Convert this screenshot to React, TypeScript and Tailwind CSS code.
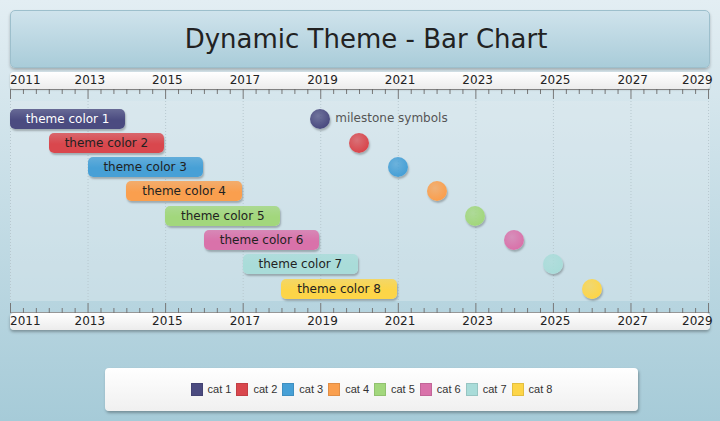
import React from 'react';

const colors = ['#4b4b80', '#d9474d', '#47a0d6', '#fa9f4e', '#a2d77c', '#d972aa', '#a9dcd9', '#fdd548'];
const years = [2011, 2013, 2015, 2017, 2019, 2021, 2023, 2025, 2027, 2029];
const px = (y: number) => (y - 2011) * 38.78;

function Ticks({ down }: { down?: boolean }) {
  const ticks = [];
  for (let i = 0; i <= 54; i++) {
    const x = px(2011 + i / 3);
    const major = i % 6 === 0;
    const h = major ? 10 : 5;
    ticks.push(<line key={i} x1={x + 0.5} x2={x + 0.5} y1={down ? 12 - h : 0} y2={down ? 12 : h} stroke="#777" strokeWidth={1} />);
  }
  return (
    <svg width="700" height="12" className="block">
      <line x1="0" x2="700" y1={down ? 11.5 : 0.5} y2={down ? 11.5 : 0.5} stroke="#999" />
      {ticks}
    </svg>
  );
}

function YearBand({ shadowTop }: { shadowTop?: boolean }) {
  return (
    <div className={`relative h-[17px] bg-gradient-to-b from-white to-[#ececec] rounded-sm ${shadowTop ? 'shadow-[0_2px_3px_rgba(0,0,0,0.3)]' : 'shadow-[0_1px_2px_rgba(0,0,0,0.2)]'}`}>
      {years.map((y, i) => (
        <span key={y} className="absolute top-0 text-[12px] leading-[17px] text-[#222]"
          style={{ left: i === years.length - 1 ? px(y) - 26 : px(y) - (i === 0 ? 0 : 13) }}>{y}</span>
      ))}
    </div>
  );
}

export default function App() {
  return (
    <div className="w-[720px] h-[421px] bg-gradient-to-b from-[#e3eef3] to-[#a6cbd8] pt-[10px] px-[10px] overflow-hidden" style={{ fontFamily: 'Tahoma, "DejaVu Sans", sans-serif' }}>
      <div className="h-[58px] rounded-[5px] bg-gradient-to-b from-[#cfe3ec] to-[#a9ccd9] border border-[#9dbfcc] shadow-[0_2px_3px_rgba(0,0,0,0.25)] flex items-center justify-center">
        <span className="text-[26px] text-[#222] pl-[12px]">Dynamic Theme - Bar Chart</span>
      </div>
      <div className="mt-[4px] w-[700px]">
        <YearBand />
        <Ticks />
        <div className="relative h-[200px] bg-[#e1ecf1]/40">
          <svg width="700" height="200" className="absolute inset-0">
            {years.map((y) => (
              <line key={y} x1={px(y) + 0.5} x2={px(y) + 0.5} y1={0} y2={200} stroke="#b8c8cf" strokeDasharray="1 2" />
            ))}
          </svg>
          {colors.map((c, i) => (
            <React.Fragment key={i}>
              <div className="absolute h-[20px] rounded-[5px] text-[12px] leading-[20px] text-center text-[#222] shadow-[1px_2px_2px_rgba(0,0,0,0.25)]"
                style={{ left: px(2011 + i), width: px(2014) - 1, top: 7.5 + i * 24.3, background: `linear-gradient(${c}cc, ${c} 55%, ${c})`, color: i === 0 ? '#fff' : '#222' }}>
                theme color {i + 1}
              </div>
              <div className="absolute w-[20px] h-[20px] rounded-full shadow-[1px_2px_2px_rgba(0,0,0,0.25)]"
                style={{ left: px(2019 + i) - 10, top: 7.5 + i * 24.3, background: `radial-gradient(circle at 40% 35%, ${c}bb, ${c} 70%)` }} />
            </React.Fragment>
          ))}
          <span className="absolute text-[12px] text-[#555] leading-[19px]" style={{ left: px(2019) + 15, top: 8 }}>milestone symbols</span>
        </div>
        <Ticks down />
        <YearBand shadowTop />
      </div>
      <div className="ml-[95px] mt-[38px] w-[533px] h-[43px] bg-gradient-to-b from-white to-[#f0f0f0] rounded-[4px] shadow-[1px_2px_3px_rgba(0,0,0,0.3)] flex items-center justify-center gap-[5px]" style={{ fontFamily: '"Liberation Sans", Arial, sans-serif' }}>
        {colors.map((c, i) => (
          <div key={i} className="flex items-center gap-[5px]">
            <span className="w-[12px] h-[13px] border border-black/10" style={{ background: c }} />
            <span className="text-[11px] text-[#333]">cat {i + 1}</span>
          </div>
        ))}
      </div>
    </div>
  );
}
